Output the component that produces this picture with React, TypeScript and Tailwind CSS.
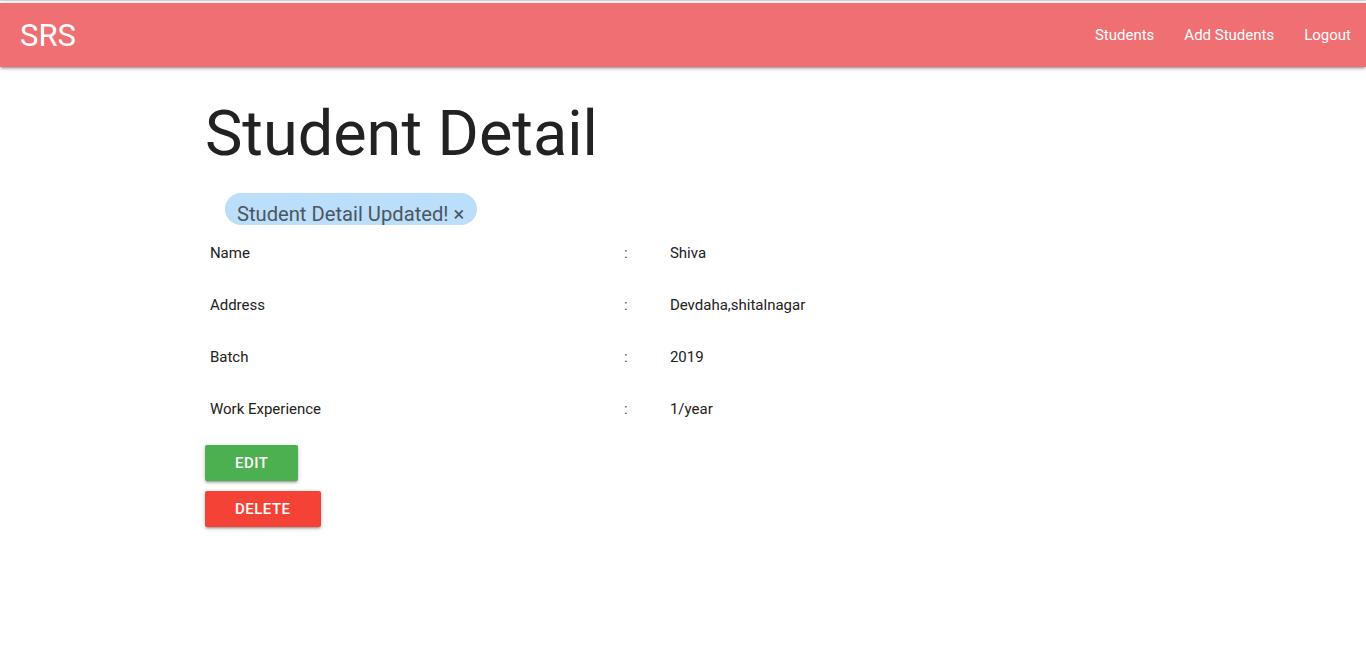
const rows = [
  { label: "Name", value: "Shiva" },
  { label: "Address", value: "Devdaha,shitalnagar" },
  { label: "Batch", value: "2019" },
  { label: "Work Experience", value: "1/year" },
];

const shadow = "shadow-[0_2px_2px_0_rgba(0,0,0,0.14),0_3px_1px_-2px_rgba(0,0,0,0.12),0_1px_5px_0_rgba(0,0,0,0.2)]";

export default function App() {
  return (
    <div className="min-h-screen bg-white font-['Roboto','Liberation_Sans',sans-serif] text-[#212121]">
      <div className="h-[3px] border-t border-[#d4d4d4] bg-white" />
      <nav className={`h-[64px] bg-[#ef6f73] text-white flex items-center justify-between ${shadow}`}>
        <a className="pl-[20px] text-[31px] leading-none">SRS</a>
        <ul className="flex h-full text-[15px]">
          <li className="px-[15px] flex items-center">Students</li>
          <li className="px-[15px] flex items-center">Add Students</li>
          <li className="px-[15px] flex items-center">Logout</li>
        </ul>
      </nav>

      <main className="w-[70%] mx-auto">
        <h1 className="mt-[32px] text-[63px] leading-[69px] text-[#222]">Student Detail</h1>

        <div className="mt-[25px] ml-[20px] flex w-fit h-[32px] pt-[5px] pl-[12px] pr-[13px] rounded-full bg-[#bbdefb] overflow-hidden">
          <span className="text-[20.2px] leading-[32px] text-[#4b5661]">Student Detail Updated! ×</span>
        </div>

        <div className="mt-[2px] text-[15px]">
          {rows.map((r) => (
            <div key={r.label} className="grid grid-cols-[414px_46px_1fr] h-[52px] items-center">
              <span className="px-[5px]">{r.label}</span>
              <span className="px-[5px] text-[#5a4a4a]">:</span>
              <span className="px-[5px]">{r.value}</span>
            </div>
          ))}
        </div>

        <div className="mt-[10px] flex flex-col items-start gap-[10px]">
          <button className={`h-[36px] px-[30px] rounded-[2px] bg-[#4caf50] text-white text-[15px] font-medium tracking-[0.5px] uppercase ${shadow}`}>
            Edit
          </button>
          <button className={`h-[36px] px-[30px] rounded-[2px] bg-[#f44336] text-white text-[15px] font-medium tracking-[0.5px] uppercase ${shadow}`}>
            Delete
          </button>
        </div>
      </main>
    </div>
  );
}
